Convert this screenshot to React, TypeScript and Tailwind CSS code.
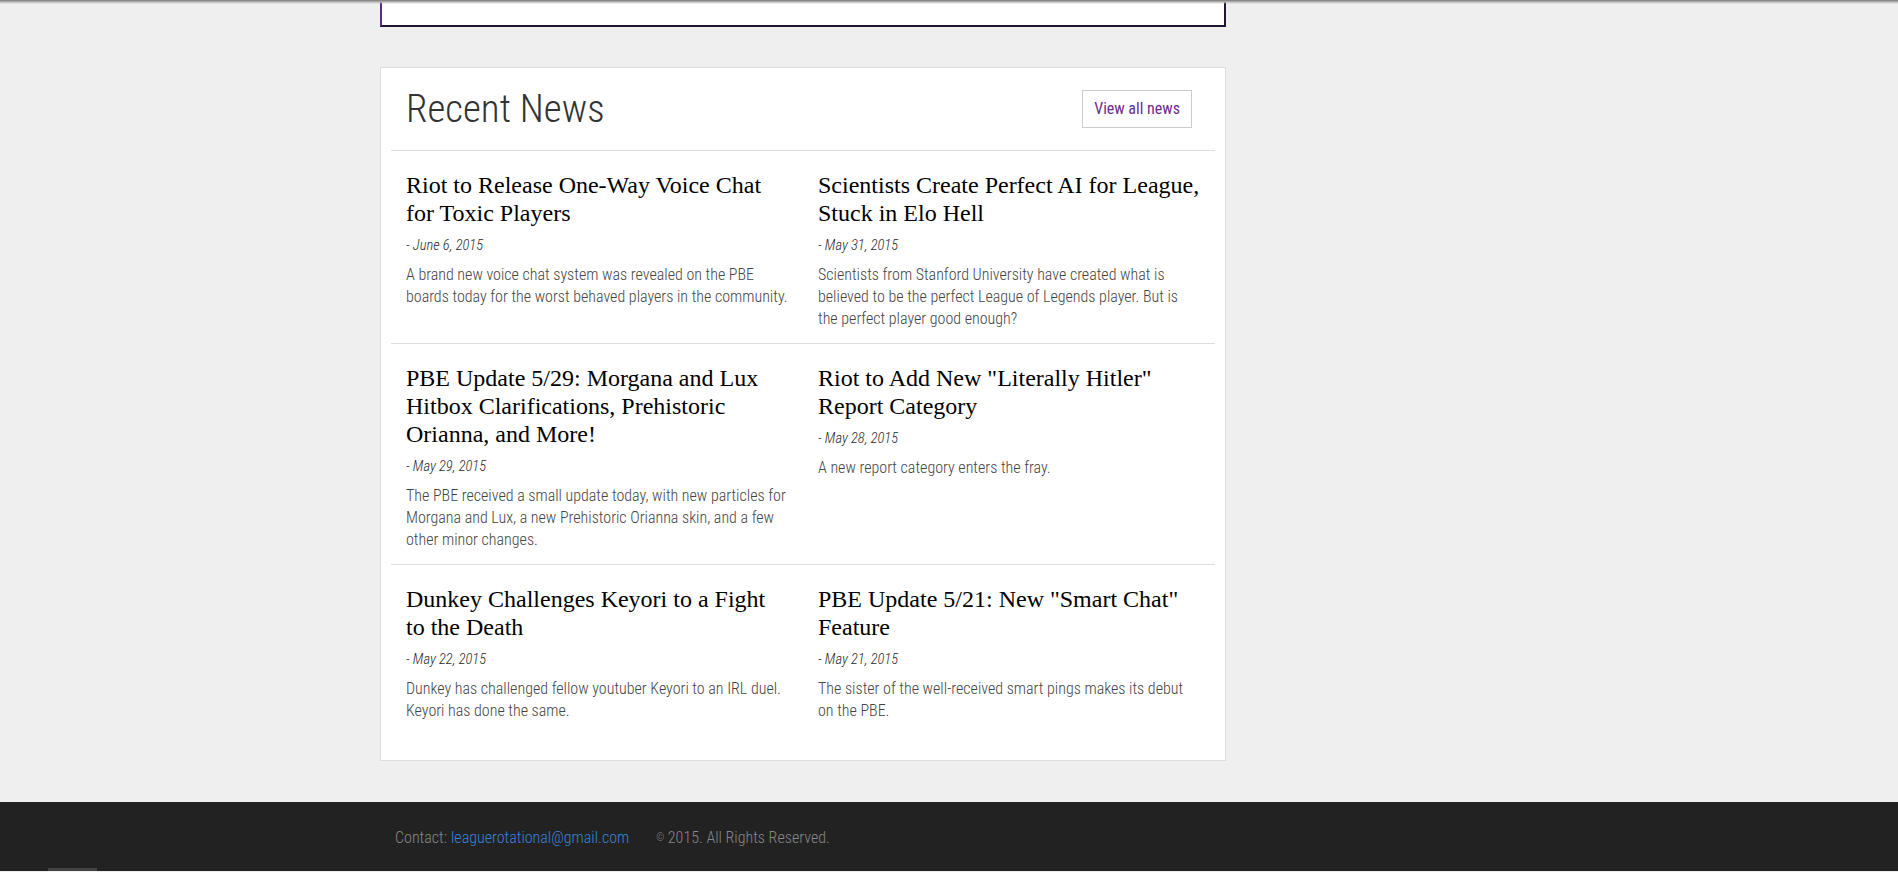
import React from "react";

type Item = { title: string; date: string; body: string };

const rows: Item[][] = [
  [
    {
      title: "Riot to Release One-Way Voice Chat for Toxic Players",
      date: "- June 6, 2015",
      body: "A brand new voice chat system was revealed on the PBE boards today for the worst behaved players in the community.",
    },
    {
      title: "Scientists Create Perfect AI for League, Stuck in Elo Hell",
      date: "- May 31, 2015",
      body: "Scientists from Stanford University have created what is believed to be the perfect League of Legends player. But is the perfect player good enough?",
    },
  ],
  [
    {
      title: "PBE Update 5/29: Morgana and Lux Hitbox Clarifications, Prehistoric Orianna, and More!",
      date: "- May 29, 2015",
      body: "The PBE received a small update today, with new particles for Morgana and Lux, a new Prehistoric Orianna skin, and a few other minor changes.",
    },
    {
      title: 'Riot to Add New "Literally Hitler" Report Category',
      date: "- May 28, 2015",
      body: "A new report category enters the fray.",
    },
  ],
  [
    {
      title: "Dunkey Challenges Keyori to a Fight to the Death",
      date: "- May 22, 2015",
      body: "Dunkey has challenged fellow youtuber Keyori to an IRL duel. Keyori has done the same.",
    },
    {
      title: 'PBE Update 5/21: New "Smart Chat" Feature',
      date: "- May 21, 2015",
      body: "The sister of the well-received smart pings makes its debut on the PBE.",
    },
  ],
];

function NewsItem({ item }: { item: Item }) {
  return (
    <div className="px-[15px]">
      <h3 className="font-['Liberation_Serif','Times_New_Roman',serif] text-[24px] leading-[28px] text-black">
        {item.title}
      </h3>
      <div className="mt-[9px] font-['Roboto',sans-serif] [font-stretch:75%] text-[14.5px] leading-[20px] font-light italic text-[#2a2a2a]">
        {item.date}
      </div>
      <p className="mt-[8px] font-['Roboto',sans-serif] [font-stretch:75%] text-[16px] leading-[22px] font-light text-[#444]">
        {item.body}
      </p>
    </div>
  );
}

export default function App() {
  return (
    <div className="relative min-h-[872px] bg-[#efefef]">
      <div className="absolute left-0 right-0 top-0 h-[4px] bg-gradient-to-b from-[#777] via-[#bbb] to-transparent" />
      <div className="mx-auto w-[1168px] px-[15px]">
        <div className="w-[846px]">
          <div className="h-[27px] border-b-2 border-l-2 border-r-2 border-b-[#231433] border-l-[#5a2d82] border-r-[#231433] bg-white" />
          <div className="mt-[40px] border border-[#dddddd] bg-white px-[10px] pt-[10px] pb-[10px]">
            <div className="flex items-center justify-between border-b border-[#dddddd] pl-[15px] pr-[23px] pt-[7px] pb-[17px]">
              <h1 className="font-['Roboto',sans-serif] [font-stretch:75%] text-[39px] leading-[48px] font-light text-[#333]">
                Recent News
              </h1>
              <button className="h-[38px] border border-[#cccccc] bg-white px-[11px] font-['Roboto',sans-serif] [font-stretch:75%] text-[16px] leading-[22px] font-normal text-[#6a2c91]">
                View all news
              </button>
            </div>
            {rows.map((row, i) => (
              <div
                key={i}
                className={
                  i < rows.length - 1
                    ? "grid grid-cols-2 border-b border-[#dddddd] pt-[20px] pb-[13px]"
                    : "grid grid-cols-2 pt-[20px] pb-[28px]"
                }
              >
                {row.map((item, j) => (
                  <NewsItem key={j} item={item} />
                ))}
              </div>
            ))}
          </div>
        </div>
      </div>
      <footer className="relative mt-[41px] h-[69px] bg-[#222222]">
        <div className="mx-auto w-[1168px] px-[15px]">
          <div className="flex items-center pl-[15px] pt-[25px] font-['Roboto',sans-serif] [font-stretch:75%] text-[16px] leading-[22px] font-light">
            <span className="text-[#888]">Contact:</span>
            <a className="ml-[4px] text-[#3a82d8]">leaguerotational@gmail.com</a>
            <span className="ml-[27px] text-[#888]">
              <span className="align-[2px] text-[10px]">©</span> 2015. All Rights Reserved.
            </span>
          </div>
        </div>
        <div className="absolute bottom-0 left-[48px] h-[3px] w-[49px] bg-[#444]" />
      </footer>
    </div>
  );
}
